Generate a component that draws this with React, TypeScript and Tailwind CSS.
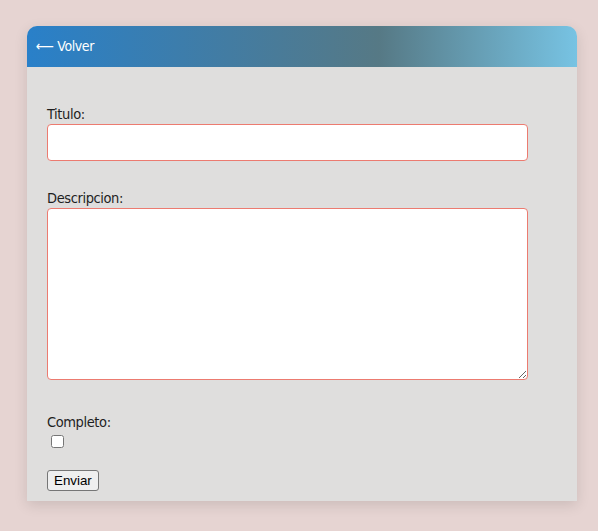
import React from "react";

export default function App() {
  return (
    <div className="min-h-[531px] w-full bg-[#e6d4d2] pt-[26px]" style={{ fontFamily: '"DejaVu Sans Condensed", "DejaVu Sans", sans-serif' }}>
      <div className="ml-[27px] w-[550px] rounded-t-[10px] bg-[#dfdedd] shadow-[0_4px_14px_rgba(0,0,0,0.12)]">
        <div className="flex h-[41px] items-center rounded-t-[10px] bg-[linear-gradient(to_right,#2980c9_0%,#567985_64%,#77c3e3_100%)] pl-[9px] text-[14px] tracking-[-0.4px] text-white">
          <span className="cursor-pointer">⟵ Volver</span>
        </div>
        <form className="flex flex-col items-start px-[20px] pt-[38px] pb-[10px] text-[14.5px] tracking-[-0.4px] text-[#1e1e1e]">
          <label className="block h-[19px] leading-[19px]">Titulo:</label>
          <input type="text" className="h-[37px] w-[481px] rounded-[4px] border border-[#ec7b70] bg-white px-2 outline-none" />
          <label className="mt-[28px] block h-[19px] leading-[19px]">Descripcion:</label>
          <textarea className="h-[172px] w-[481px] rounded-[4px] border border-[#ec7b70] bg-white p-2 outline-none" />
          <label className="mt-[33px] block h-[19px] leading-[19px]">Completo:</label>
          <input type="checkbox" className="m-[3px_3px_3px_4px] h-[13px] w-[13px]" />
          <button type="button" className="mt-[19px] h-[21px] rounded-[3px] border border-[#767676] bg-[#efefef] px-[6px] text-[13.33px] leading-[17px] tracking-normal text-black" style={{ fontFamily: '"Liberation Sans", Arial, sans-serif' }}>
            Enviar
          </button>
        </form>
      </div>
    </div>
  );
}
